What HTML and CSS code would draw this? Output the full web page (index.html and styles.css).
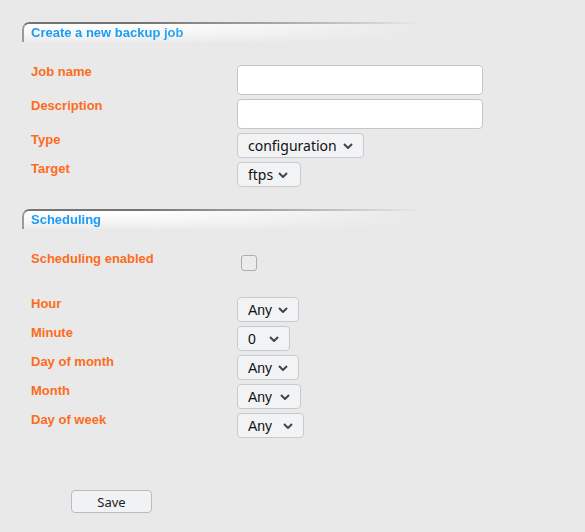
FILE: index.html
```html
<!DOCTYPE html>
<html lang="en">
<head>
<meta charset="utf-8">
<title>Create a new backup job</title>
<link rel="stylesheet" href="styles.css">
</head>
<body>
<div class="page">
  <div class="section-head"><span>Create a new backup job</span></div>
  <div class="form">
    <label class="lbl" for="jobname">Job name</label>
    <input class="text" id="jobname" type="text">
    <label class="lbl" for="desc">Description</label>
    <input class="text" id="desc" type="text">
    <label class="lbl" for="type">Type</label>
    <select class="sel sans w-config" id="type"><option>configuration</option></select>
    <label class="lbl" for="target">Target</label>
    <select class="sel sans w-ftps" id="target"><option>ftps</option></select>
  </div>

  <div class="section-head second"><span>Scheduling</span></div>
  <div class="form">
    <label class="lbl" for="sched">Scheduling enabled</label>
    <input class="check" id="sched" type="checkbox">
    <label class="lbl" for="hour">Hour</label>
    <select class="sel w-hour" id="hour"><option>Any</option></select>
    <label class="lbl" for="minute">Minute</label>
    <select class="sel w-minute" id="minute"><option>0</option></select>
    <label class="lbl" for="dom">Day of month</label>
    <select class="sel w-dom" id="dom"><option>Any</option></select>
    <label class="lbl" for="month">Month</label>
    <select class="sel w-month" id="month"><option>Any</option></select>
    <label class="lbl" for="dow">Day of week</label>
    <select class="sel w-dow" id="dow"><option>Any</option></select>
  </div>

  <div class="actions">
    <button class="btn" type="button">Save</button>
  </div>
</div>
</body>
</html>
```

FILE: styles.css
```css
html, body {
  margin: 0;
  padding: 0;
  background: #e9e9e9;
  font-family: "Liberation Sans", Arial, sans-serif;
}

.page {
  padding: 22px 0 0 22px;
}

.section-head {
  width: 390px;
  height: 18px;
  border-top: 2px solid #747474;
  border-left: 2px solid #9a9a9a;
  border-top-left-radius: 7px;
  padding-left: 7px;
  background: linear-gradient(to bottom, #ffffff 0%, #f7f7f7 55%, #ebebeb 100%);
  -webkit-mask-image: linear-gradient(to right, #000 30%, rgba(0,0,0,0.55) 65%, transparent 100%);
  mask-image: linear-gradient(to right, #000 30%, rgba(0,0,0,0.55) 65%, transparent 100%);
  font-weight: bold;
  font-size: 13px;
  line-height: 18px;
  color: #1a9cf4;
}

.section-head.second {
  margin-top: 22px;
}

.form {
  display: grid;
  grid-template-columns: 206px auto;
  row-gap: 4px;
  padding-left: 9px;
  margin-top: 23px;
  justify-items: start;
  align-items: start;
}

.lbl {
  font-weight: bold;
  font-size: 13px;
  line-height: 14px;
  color: #fd6c1c;
}

.text {
  width: 246px;
  height: 30px;
  box-sizing: border-box;
  margin: 0;
  padding: 0 6px;
  border: 1px solid #c6c6c6;
  border-radius: 4px;
  background: #ffffff;
}

.sel {
  -webkit-appearance: none;
  appearance: none;
  height: 25px;
  box-sizing: border-box;
  margin: 0;
  padding: 0 0 0 10px;
  border: 1px solid #c8cbce;
  border-radius: 4px;
  background: #f2f3f5 url("data:image/svg+xml,%3Csvg xmlns='http://www.w3.org/2000/svg' width='10' height='6' viewBox='0 0 10 6'%3E%3Cpath d='M1 1l4 4 4-4' fill='none' stroke='%23444' stroke-width='2'/%3E%3C/svg%3E") no-repeat right 10px center;
  font-family: "Liberation Sans", Arial, sans-serif;
  font-size: 14px;
  color: #111;
}

.sel.sans {
  font-family: "Noto Sans", "Open Sans", sans-serif;
  font-size: 14px;
}

.w-config { width: 127px; }
.w-ftps { width: 64px; background-position: right 12px center; }
.w-hour { width: 62px; }
.w-minute { width: 53px; }
.w-dom { width: 62px; }
.w-month { width: 64px; }
.w-dow { width: 67px; }

.check {
  -webkit-appearance: none;
  appearance: none;
  width: 16px;
  height: 16px;
  box-sizing: border-box;
  margin: 3px 0 22px 4px;
  border: 1px solid #a9aeb4;
  border-radius: 3px;
  background: #ececec;
}

.actions {
  margin-top: 52px;
  padding-left: 49px;
}

.btn {
  width: 81px;
  height: 23px;
  box-sizing: border-box;
  margin: 0;
  padding: 0;
  border: 1px solid #b9bdc2;
  border-radius: 4px;
  background: #f1f2f4;
  font-family: "Noto Sans", "Open Sans", sans-serif;
  font-size: 13px;
  color: #222;
}
```
